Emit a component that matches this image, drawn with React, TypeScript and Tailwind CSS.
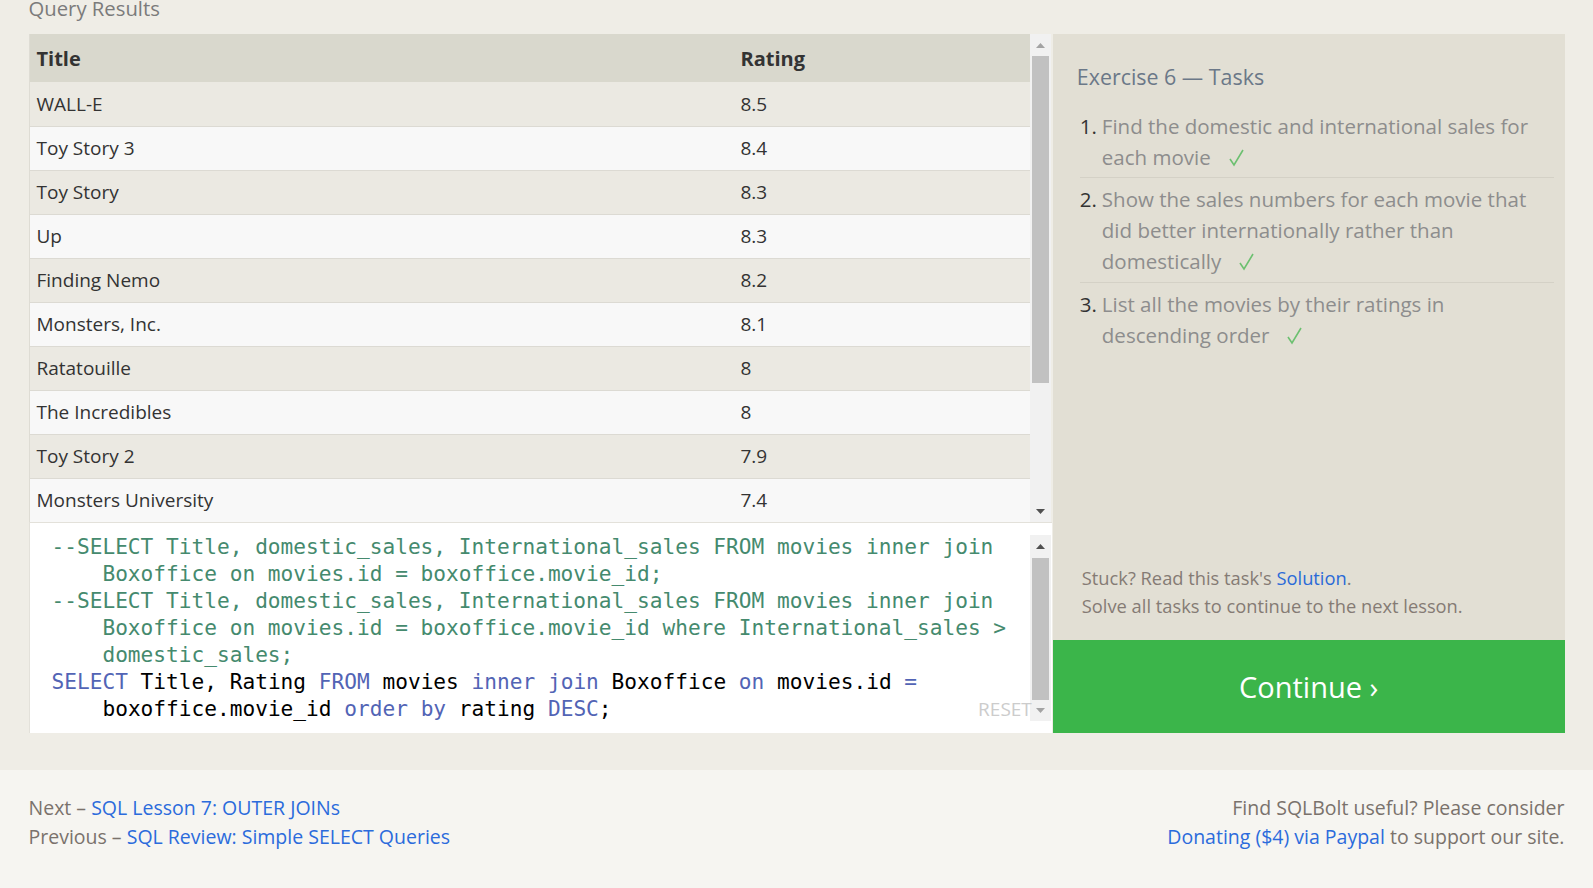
import React from "react";

const rows: [string, string][] = [
  ["WALL-E", "8.5"],
  ["Toy Story 3", "8.4"],
  ["Toy Story", "8.3"],
  ["Up", "8.3"],
  ["Finding Nemo", "8.2"],
  ["Monsters, Inc.", "8.1"],
  ["Ratatouille", "8"],
  ["The Incredibles", "8"],
  ["Toy Story 2", "7.9"],
  ["Monsters University", "7.4"],
];

const sans = "font-['Open_Sans','Noto_Sans',sans-serif]";

function Up({ dark }: { dark?: boolean }) {
  return (
    <svg width="9" height="5" viewBox="0 0 9 5">
      <polygon points="0,5 9,5 4.5,0" fill={dark ? "#505050" : "#a3a3a3"} />
    </svg>
  );
}
function Down({ dark }: { dark?: boolean }) {
  return (
    <svg width="9" height="5" viewBox="0 0 9 5">
      <polygon points="0,0 9,0 4.5,5" fill={dark ? "#505050" : "#a3a3a3"} />
    </svg>
  );
}

function Check() {
  return (
    <svg width="15" height="18" viewBox="0 0 15 18" className="inline-block ml-[18px] align-[-2px]">
      <polyline points="1,10 5,16 14,1" fill="none" stroke="#6cc070" strokeWidth="1.6" />
    </svg>
  );
}

const C = ({ children }: { children: React.ReactNode }) => <span className="text-[#458a6e]">{children}</span>;
const K = ({ children }: { children: React.ReactNode }) => <span className="text-[#5264b5]">{children}</span>;

export default function App() {
  return (
    <div className={`min-h-screen bg-[#f6f5f1] ${sans} overflow-hidden`}>
      <div className="bg-[#efede6] pb-[37px]">
        <div className="w-[1536px] mx-auto">
          <div className="-mt-[7px] h-[41px] text-[20.3px] leading-[30px] text-[#7b7b7b]">Query Results</div>
          <div className="flex">
            <div className="w-[1024px] flex flex-col">
              <div className="flex h-[488px]">
                <div className="w-[1001px] border-l border-[#dedcd4] text-[19px] text-[#333]">
                  <div className="flex h-[48px] items-center bg-[#d9d8cd] font-bold text-[20px] pt-[2px]">
                    <div className="w-[703px] pl-[7px]">Title</div>
                    <div className="pl-[8px]">Rating</div>
                  </div>
                  {rows.map(([t, r], i) => (
                    <div
                      key={t}
                      className={`flex h-[44px] items-center ${i > 0 ? "border-t border-[#dcdad3]" : ""} ${
                        i % 2 === 0 ? "bg-[#ebe9e2]" : "bg-[#f8f8f8]"
                      }`}
                    >
                      <div className="w-[703px] pl-[7px]">{t}</div>
                      <div className="pl-[8px]">{r}</div>
                    </div>
                  ))}
                </div>
                <div className="w-[21px] bg-[#f1f1f1] flex flex-col items-center">
                  <div className="h-[22px] flex items-center justify-center">
                    <Up />
                  </div>
                  <div className="w-[17px] h-[327px] bg-[#c1c1c1]" />
                  <div className="flex-1" />
                  <div className="h-[22px] flex items-center justify-center">
                    <Down dark />
                  </div>
                </div>
              </div>
              <div className="relative flex h-[211px] bg-white border-l border-t border-[#e3e1da]">
                <div className="w-[1000px] pl-[22px] pt-[10px] font-['DejaVu_Sans_Mono',monospace] text-[21.15px] leading-[27px] whitespace-pre text-black">
                  <div><C>--SELECT Title, domestic_sales, International_sales FROM movies inner join</C></div>
                  <div><C>    Boxoffice on movies.id = boxoffice.movie_id;</C></div>
                  <div><C>--SELECT Title, domestic_sales, International_sales FROM movies inner join</C></div>
                  <div><C>    Boxoffice on movies.id = boxoffice.movie_id where International_sales &gt;</C></div>
                  <div><C>    domestic_sales;</C></div>
                  <div>
                    <K>SELECT</K> Title, Rating <K>FROM</K> movies <K>inner</K> <K>join</K> Boxoffice <K>on</K> movies.id <K>=</K>
                  </div>
                  <div>
                    {"    "}boxoffice.movie_id <K>order</K> <K>by</K> rating <K>DESC</K>;
                  </div>
                </div>
                <div className="w-[21px] pt-[12px] pb-[12px] flex flex-col">
                  <div className="flex-1 bg-[#f1f1f1] flex flex-col items-center">
                    <div className="h-[23px] flex items-center justify-center">
                      <Up dark />
                    </div>
                    <div className="w-[17px] h-[142px] bg-[#c1c1c1]" />
                    <div className="flex-1 flex items-center justify-center">
                      <Down />
                    </div>
                  </div>
                </div>
                <div className="absolute right-[20px] bottom-[12px] text-[19px] leading-[24px] text-[#cccccc]">RESET</div>
              </div>
            </div>
            <div className="w-[512px] h-[699px] ml-[1px] bg-[#e2dfd4] flex flex-col">
              <div className="pl-[24px] pt-[27px] text-[21.4px] leading-[32px] text-[#6b7888]">Exercise 6 — Tasks</div>
              <ol className="mt-[18px] pl-[27px] pr-[11px] text-[20.5px] leading-[31px] text-[#8d8d8d]">
                <li className="flex pb-[4px] border-b border-[#d4d1c6]">
                  <span className="w-[22px] shrink-0 text-[#333]">1.</span>
                  <span>
                    Find the domestic and international sales for each movie
                    <Check />
                  </span>
                </li>
                <li className="flex pt-[6px] pb-[5px] border-b border-[#d4d1c6]">
                  <span className="w-[22px] shrink-0 text-[#333]">2.</span>
                  <span>
                    Show the sales numbers for each movie that did better internationally rather than domestically
                    <Check />
                  </span>
                </li>
                <li className="flex pt-[6px]">
                  <span className="w-[22px] shrink-0 text-[#333]">3.</span>
                  <span>
                    List all the movies by their ratings in descending order
                    <Check />
                  </span>
                </li>
              </ol>
              <div className="flex-1" />
              <div className="pl-[29px] pb-[20px] text-[18.3px] leading-[28px] text-[#857b74]">
                <div>
                  Stuck? Read this task's <span className="text-[#2a6ad8]">Solution</span>.
                </div>
                <div>Solve all tasks to continue to the next lesson.</div>
              </div>
              <div className="h-[93px] bg-[#3bb54a] flex items-center justify-center text-white text-[29px] pt-[1px]">
                Continue ›
              </div>
            </div>
          </div>
        </div>
      </div>
      <div className="w-[1536px] mx-auto pt-[23px] pb-[40px] flex justify-between text-[19.5px] leading-[29px] text-[#7a726c]">
        <div>
          <div>
            Next – <span className="text-[#2b6bdc]">SQL Lesson 7: OUTER JOINs</span>
          </div>
          <div>
            Previous – <span className="text-[#2b6bdc]">SQL Review: Simple SELECT Queries</span>
          </div>
        </div>
        <div className="text-right">
          <div>Find SQLBolt useful? Please consider</div>
          <div>
            <span className="text-[#2b6bdc]">Donating ($4) via Paypal</span> to support our site.
          </div>
        </div>
      </div>
    </div>
  );
}
